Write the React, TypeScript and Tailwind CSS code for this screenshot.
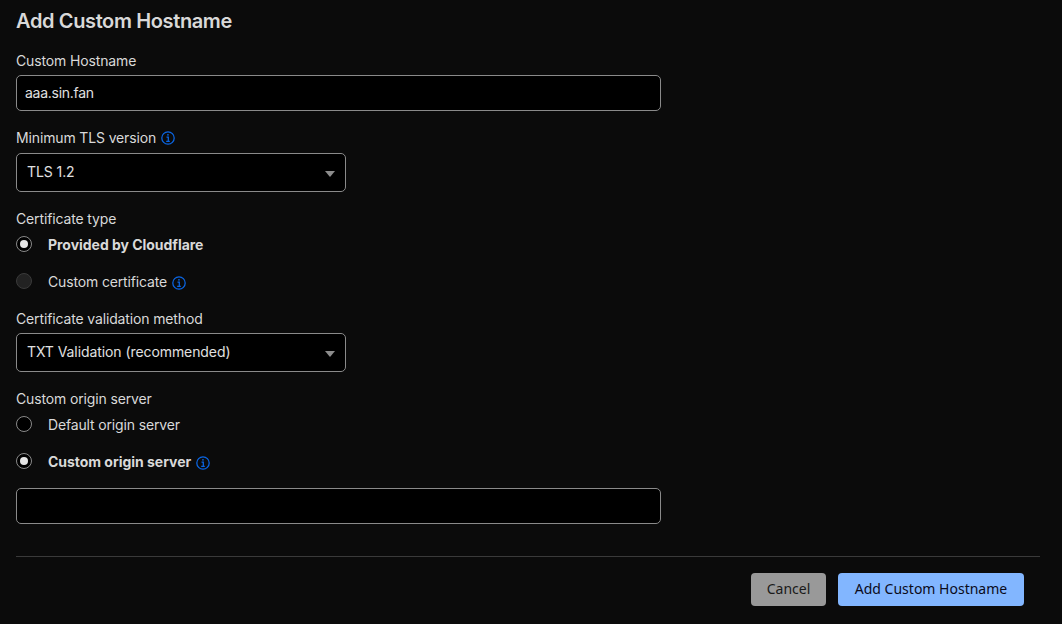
const font = "font-['Inter',sans-serif]";

function Info() {
  return (
    <svg width="14" height="14" viewBox="0 0 14 14" fill="none" className="shrink-0">
      <circle cx="7" cy="7" r="6.2" stroke="#0b66e4" strokeWidth="1.25" />
      <path d="M5.5 6h1.8v4.1M5.2 10.3h3.6" stroke="#0b66e4" strokeWidth="1.25" />
      <rect x="6.2" y="3.1" width="1.5" height="1.5" fill="#0b66e4" />
    </svg>
  );
}

function Radio({ state }: { state: "on" | "off" | "disabled" }) {
  if (state === "disabled") {
    return <span className="w-4 h-4 rounded-full bg-[#222222] border border-[#3a3a3a] shrink-0" />;
  }
  return (
    <span className="w-4 h-4 rounded-full bg-black border border-[#8a8a8a] shrink-0 flex items-center justify-center">
      {state === "on" && <span className="w-2 h-2 rounded-full bg-[#e6e6e6]" />}
    </span>
  );
}

function Option({ state, label, bold, info, className }: { state: "on" | "off" | "disabled"; label: string; bold?: boolean; info?: boolean; className: string }) {
  return (
    <div className={`flex items-center h-5 ${className}`}>
      <Radio state={state} />
      <span className={`ml-4 mt-[2px] text-sm leading-5 text-[#d9d9d9] ${bold ? "font-bold tracking-[-0.03px]" : "tracking-[-0.15px]"}`}>{label}</span>
      {info && <span className="ml-[5px] mt-[3px]"><Info /></span>}
    </div>
  );
}

function Select({ value, className }: { value: string; className: string }) {
  return (
    <div className={`w-[330px] h-[39px] bg-black border border-[#8a8a8a] rounded-[5px] flex items-center justify-between pl-[10px] pr-[10px] ${className}`}>
      <span className="text-sm text-[#e0e0e0] tracking-[-0.08px] -mt-[1px]">{value}</span>
      <svg width="10" height="6" viewBox="0 0 10 6" className="mt-[3px]"><path d="M0 0h10L5 6z" fill="#8c8c8c" /></svg>
    </div>
  );
}

function Label({ children, className }: { children: React.ReactNode; className: string }) {
  return <div className={`flex items-center gap-[5px] h-5 text-sm leading-5 text-[#d9d9d9] tracking-[-0.14px] ${className}`}>{children}</div>;
}

export default function App() {
  return (
    <div className={`${font} w-[1062px] h-[624px] overflow-hidden bg-[#0b0b0b] pl-4 pr-[22px]`}>
      <h1 className="text-xl leading-7 font-semibold text-[#d9d9d9] pt-[7px] box-content tracking-[-0.37px]">Add Custom Hostname</h1>
      <Label className="mt-[16px]">Custom Hostname</Label>
      <div className="mt-1 w-[645px] h-9 bg-black border border-[#8a8a8a] rounded-[5px] flex items-center pl-2 text-sm text-[#e0e0e0] tracking-[-0.27px]">aaa.sin.fan</div>
      <Label className="mt-[17px]">Minimum TLS version <Info /></Label>
      <Select value="TLS 1.2" className="mt-[5px]" />
      <Label className="mt-[17px]">Certificate type</Label>
      <Option state="on" label="Provided by Cloudflare" bold className="mt-[5px]" />
      <Option state="disabled" label="Custom certificate" info className="mt-[17px]" />
      <Label className="mt-[18px]">Certificate validation method</Label>
      <Select value="TXT Validation (recommended)" className="mt-[4px]" />
      <Label className="mt-[17px]">Custom origin server</Label>
      <Option state="off" label="Default origin server" className="mt-[5px]" />
      <Option state="on" label="Custom origin server" bold info className="mt-[17px]" />
      <div className="mt-[17px] w-[645px] h-9 bg-black border border-[#8a8a8a] rounded-[5px]" />
      <div className="mt-8 h-px w-[1024px] bg-[#3a3a3a]" />
      <div className="mt-4 flex justify-end gap-3 w-[1008px] font-['Noto_Sans',sans-serif]">
        <button className="w-[75px] h-[33px] pb-[2px] rounded-[4px] bg-[#999999] text-sm text-[#1a1a1a]">Cancel</button>
        <button className="w-[186px] h-[33px] pb-[2px] rounded-[4px] bg-[#82b6ff] text-sm text-[#0b0b1a]">Add Custom Hostname</button>
      </div>
    </div>
  );
}
